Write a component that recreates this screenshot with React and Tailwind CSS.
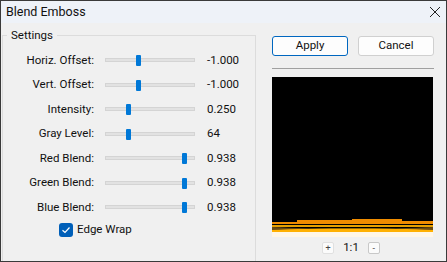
import React from 'react';

const rows = [
  { label: 'Horiz. Offset:', value: '-1.000', pos: 0.37 },
  { label: 'Vert. Offset:', value: '-1.000', pos: 0.37 },
  { label: 'Intensity:', value: '0.250', pos: 0.245 },
  { label: 'Gray Level:', value: '64', pos: 0.245 },
  { label: 'Red Blend:', value: '0.938', pos: 0.91 },
  { label: 'Green Blend:', value: '0.938', pos: 0.91 },
  { label: 'Blue Blend:', value: '0.938', pos: 0.91 },
];

const Slider = ({ pos }) => (
  <div className="relative w-[90px] h-[12px] flex items-center">
    <div className="w-full h-[4px] bg-[#e2e2e2] border border-[#d4d4d4]"></div>
    <div
      className="absolute top-[1px] w-[5px] h-[11px] bg-[#0078d7] rounded-[1px]"
      style={{ left: `${pos * 85}px` }}
    ></div>
  </div>
);

const Preview = () => (
  <svg width="161" height="160" viewBox="0 0 161 160" className="block">
    <rect width="161" height="160" fill="#000" />
    <path d="M0 145 H25 V143 H80 V142 H130 V144 H161 V147 H0 Z" fill="#f08c00" />
    <path d="M0 148 H161 V150 H0 Z" fill="#e6a000" />
    <path d="M0 150 C40 152 120 152 161 150 V153 H0 Z" fill="#6b4a10" />
    <path d="M0 153 C40 151 120 151 161 153 V155 H0 Z" fill="#ffb000" />
    <rect x="0" y="155" width="161" height="5" fill="#fff6e6" />
  </svg>
);

export default function App() {
  return (
    <div
      className="w-[447px] h-[262px] bg-[#f0f0f0] border border-[#3a3a3a] flex flex-col text-[11.5px] text-[#111] overflow-hidden"
      style={{ fontFamily: 'Roboto, "Liberation Sans", sans-serif' }}
    >
      {/* title bar */}
      <div className="h-[22px] bg-[#eef2f8] flex items-center justify-between pl-[5px] pr-[4px] shrink-0">
        <span className="text-[12.5px] leading-none">Blend Emboss</span>
        <svg width="12" height="12" viewBox="0 0 12 12" className="mr-[1px]">
          <path d="M1 1 L11 11 M11 1 L1 11" stroke="#222" strokeWidth="1" />
        </svg>
      </div>

      <div className="flex flex-1 pt-[6px]">
        {/* settings group */}
        <div className="relative ml-[1px] w-[254px] h-[232px] mt-[6px] border border-[#dcdcdc]">
          <span className="absolute -top-[9px] left-[4px] px-[4px] bg-[#f0f0f0] leading-[16px]">Settings</span>
          <div className="flex flex-col pt-[16px] gap-[8px]">
            {rows.map((r) => (
              <div key={r.label} className="flex items-center h-[16.5px]">
                <span className="w-[91px] text-right leading-none">{r.label}</span>
                <div className="ml-[11px]">
                  <Slider pos={r.pos} />
                </div>
                <span className="ml-[12px] leading-none">{r.value}</span>
              </div>
            ))}
            <div className="flex items-center pl-[56px] -mt-[1px]">
              <div className="w-[14px] h-[14px] bg-[#005fb8] rounded-[3px] flex items-center justify-center">
                <svg width="10" height="10" viewBox="0 0 10 10">
                  <path d="M1.5 5.2 L4 7.5 L8.5 2.5" stroke="#fff" strokeWidth="1.2" fill="none" />
                </svg>
              </div>
              <span className="ml-[4px] leading-none">Edge Wrap</span>
            </div>
          </div>
        </div>

        {/* right side */}
        <div className="ml-[16px] flex flex-col w-[162px] pt-[7px]">
          <div className="flex gap-[10px]">
            <button className="w-[76px] h-[20px] bg-[#fdfdfd] border border-[#0067c0] rounded-[3px] leading-none">Apply</button>
            <button className="w-[76px] h-[20px] bg-[#fdfdfd] border border-[#d0d0d0] rounded-[3px] leading-none">Cancel</button>
          </div>
          <div className="mt-[12px] h-[1px] bg-[#a0a0a0] w-[162px]"></div>
          <div className="mt-[8px]">
            <Preview />
          </div>
          <div className="flex items-center justify-center mt-[5px] gap-[9px] pr-[4px]">
            <div className="w-[12px] h-[12px] bg-[#fbfbfb] border border-[#e0e0e0] rounded-[2px] flex items-center justify-center text-[9px] leading-none text-[#444]">+</div>
            <span className="leading-none">1:1</span>
            <div className="w-[12px] h-[12px] bg-[#fbfbfb] border border-[#c8c8c8] rounded-[2px] flex items-center justify-center text-[9px] leading-none text-[#444]">-</div>
          </div>
        </div>
      </div>
    </div>
  );
}
